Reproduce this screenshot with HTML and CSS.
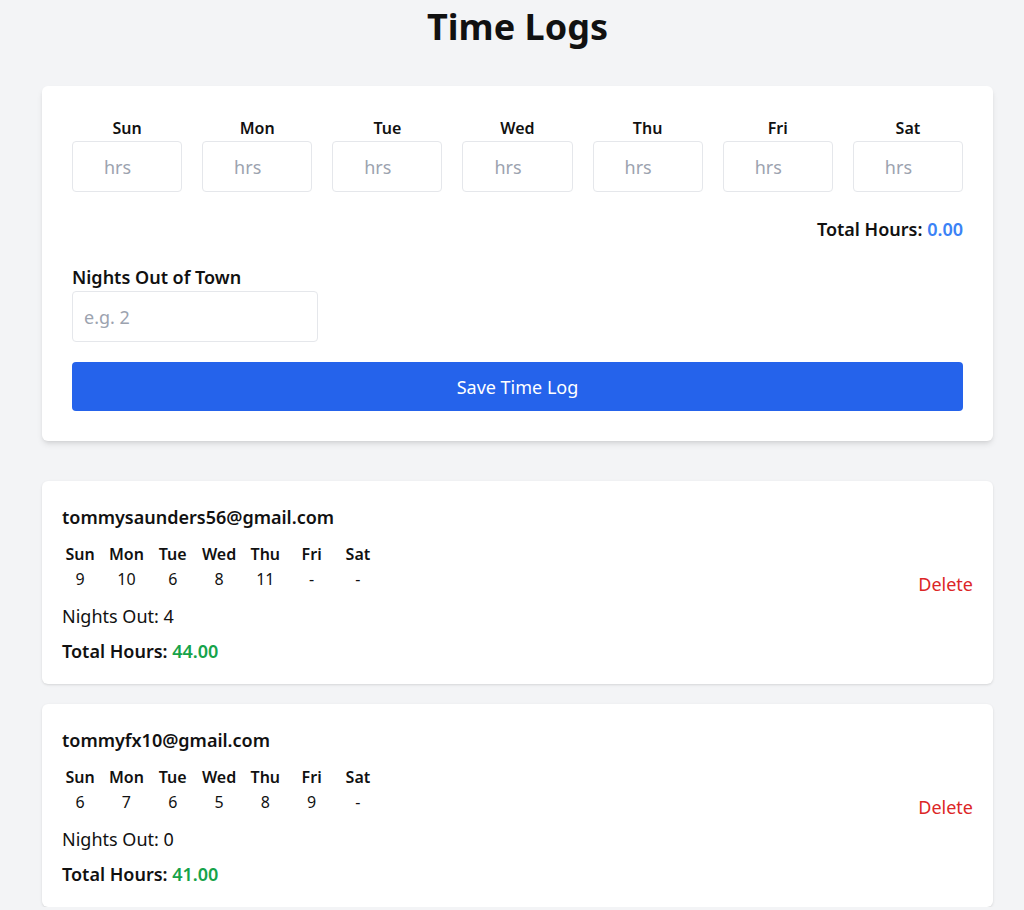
FILE: index.html
```html
<!DOCTYPE html>
<html lang="en">
<head>
    <meta charset="UTF-8" />
    <meta name="viewport" content="width=device-width, initial-scale=1.0" />
    <title>Time Logs</title>
    <link rel="stylesheet" href="styles.css">
</head>
<body>
    <h1 class="page-title">Time Logs</h1>

    <form class="card log-form" onsubmit="return false;">
        <div class="day-inputs">
            <label class="day-field"><span class="day-label">Sun</span><input type="number" placeholder="hrs"></label>
            <label class="day-field"><span class="day-label">Mon</span><input type="number" placeholder="hrs"></label>
            <label class="day-field"><span class="day-label">Tue</span><input type="number" placeholder="hrs"></label>
            <label class="day-field"><span class="day-label">Wed</span><input type="number" placeholder="hrs"></label>
            <label class="day-field"><span class="day-label">Thu</span><input type="number" placeholder="hrs"></label>
            <label class="day-field"><span class="day-label">Fri</span><input type="number" placeholder="hrs"></label>
            <label class="day-field"><span class="day-label">Sat</span><input type="number" placeholder="hrs"></label>
        </div>

        <div class="form-total">Total Hours: <span class="total-blue">0.00</span></div>

        <label class="nights-field">
            <span class="nights-label">Nights Out of Town</span>
            <input type="number" placeholder="e.g. 2">
        </label>

        <button class="save-btn" type="submit">Save Time Log</button>
    </form>

    <div class="log-list">
        <div class="card log-entry">
            <div class="log-info">
                <div class="log-email">tommysaunders56@gmail.com</div>
                <div class="log-days">
                    <span class="dh">Sun</span><span class="dh">Mon</span><span class="dh">Tue</span><span class="dh">Wed</span><span class="dh">Thu</span><span class="dh">Fri</span><span class="dh">Sat</span>
                    <span>9</span><span>10</span><span>6</span><span>8</span><span>11</span><span>-</span><span>-</span>
                </div>
                <div class="log-nights">Nights Out: 4</div>
                <div class="log-total">Total Hours: <span class="total-green">44.00</span></div>
            </div>
            <button class="delete-btn">Delete</button>
        </div>

        <div class="card log-entry">
            <div class="log-info">
                <div class="log-email">tommyfx10@gmail.com</div>
                <div class="log-days">
                    <span class="dh">Sun</span><span class="dh">Mon</span><span class="dh">Tue</span><span class="dh">Wed</span><span class="dh">Thu</span><span class="dh">Fri</span><span class="dh">Sat</span>
                    <span>6</span><span>7</span><span>6</span><span>5</span><span>8</span><span>9</span><span>-</span>
                </div>
                <div class="log-nights">Nights Out: 0</div>
                <div class="log-total">Total Hours: <span class="total-green">41.00</span></div>
            </div>
            <button class="delete-btn">Delete</button>
        </div>
    </div>
</body>
</html>
```

FILE: styles.css
```css
body {
    margin: 0;
    padding: 0 31px 0 42px;
    background-color: #f3f4f6;
    color: #111;
    font-family: "Segoe UI", "Noto Sans", sans-serif;
}
.page-title {
    margin: 0;
    padding: 4px 0 36px;
    text-align: center;
    font-size: 36px;
    line-height: 46px;
    font-weight: 700;
}
.card {
    background: white;
    border-radius: 6px;
}
.log-form {
    padding: 30px;
    box-shadow: 0 4px 6px -1px rgba(0,0,0,0.1), 0 2px 4px -2px rgba(0,0,0,0.1);
}
.day-inputs {
    display: grid;
    grid-template-columns: repeat(7, 1fr);
    gap: 20px;
}
.day-field {
    display: flex;
    flex-direction: column;
    align-items: center;
}
.day-label {
    font-size: 16px;
    font-weight: 600;
    line-height: 25px;
}
input {
    box-sizing: border-box;
    width: 100%;
    height: 51px;
    border: 1px solid #e5e7eb;
    border-radius: 4px;
    font-family: inherit;
    font-size: 18px;
    color: #111;
    padding: 0 11px;
    -moz-appearance: textfield;
}
input::-webkit-outer-spin-button,
input::-webkit-inner-spin-button {
    -webkit-appearance: none;
    margin: 0;
}
input::placeholder { color: #9ca3af; }
.day-field input {
    text-align: center;
    padding-right: 30px;
}
.form-total {
    margin-top: 24px;
    text-align: right;
    font-size: 18px;
    font-weight: 600;
    line-height: 26px;
}
.total-blue { color: #3b82f6; }
.nights-field {
    display: flex;
    flex-direction: column;
    width: 246px;
    margin-top: 22px;
}
.nights-label {
    font-size: 18px;
    font-weight: 600;
    line-height: 26px;
}
.nights-field input { margin-top: 1px; }
.save-btn {
    display: block;
    width: 100%;
    height: 49px;
    margin-top: 20px;
    border: none;
    border-radius: 4px;
    background-color: #2563eb;
    color: white;
    font-family: inherit;
    font-size: 18px;
    cursor: pointer;
}
.log-list {
    display: flex;
    flex-direction: column;
    gap: 20px;
    margin-top: 40px;
}
.log-entry {
    display: flex;
    align-items: center;
    justify-content: space-between;
    padding: 21px 20px 19px;
    box-shadow: 0 1px 3px rgba(0,0,0,0.1), 0 1px 2px -1px rgba(0,0,0,0.1);
}
.log-email {
    font-size: 18px;
    font-weight: 600;
    line-height: 30px;
}
.log-days {
    display: grid;
    grid-template-columns: repeat(7, 36.3px);
    column-gap: 10px;
    margin-top: 10px;
    text-align: center;
    font-size: 16px;
    line-height: 25px;
}
.dh { font-weight: 600; }
.log-nights {
    margin-top: 10px;
    font-size: 18px;
    line-height: 28px;
}
.log-total {
    margin-top: 7px;
    font-size: 18px;
    font-weight: 600;
    line-height: 28px;
}
.total-green { color: #16a34a; }
.delete-btn {
    border: none;
    background: none;
    padding: 0;
    color: #dc2626;
    font-family: inherit;
    font-size: 18px;
    cursor: pointer;
}
```
